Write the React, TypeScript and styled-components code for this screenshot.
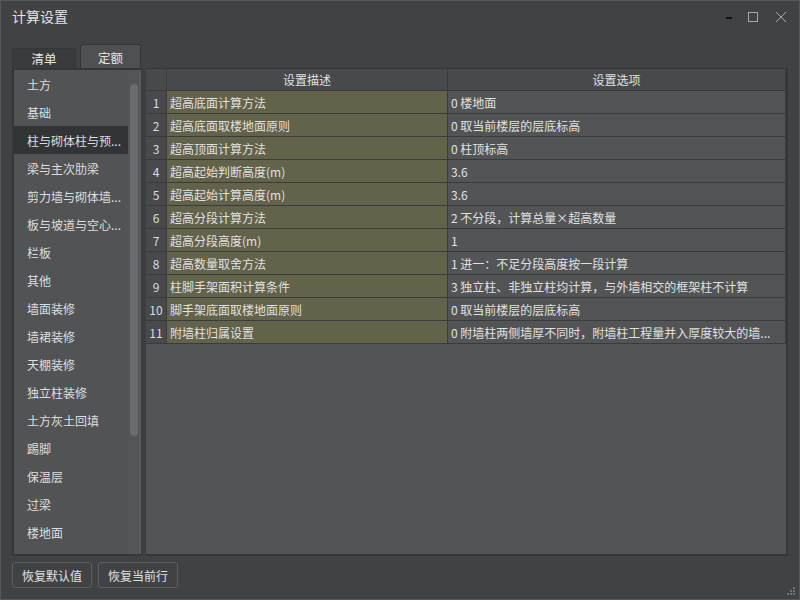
import styled, { createGlobalStyle } from "styled-components";

const GlobalStyle = createGlobalStyle`
  html, body {
    margin: 0;
    padding: 0;
    background: #414243;
  }
  * {
    box-sizing: border-box;
  }
`;

const Window = styled.div`
  width: 800px;
  height: 600px;
  background: #414243;
  border: 1px solid #55575a;
  display: flex;
  flex-direction: column;
  font-family: "Noto Sans CJK SC", "Noto Sans", sans-serif;
  color: #dcdcdc;
  position: relative;
  overflow: hidden;
`;

const TitleBar = styled.div`
  height: 33px;
  display: flex;
  align-items: center;
  padding: 0 4px 0 11px;
`;

const Title = styled.div`
  flex: 1;
  font-size: 14px;
  color: #e2e2e2;
  margin-top: -4px;
`;

const WinButton = styled.div`
  width: 28px;
  height: 30px;
  display: flex;
  align-items: center;
  justify-content: center;
  margin-top: -2px;
`;

const Body = styled.div`
  flex: 1;
  display: flex;
  flex-direction: column;
  padding: 10px 11px 0 11px;
`;

const TabRow = styled.div`
  display: flex;
  align-items: flex-end;
  gap: 4px;
  height: 24px;
`;

const Tab = styled.div<{ $active?: boolean }>`
  height: ${(p) => (p.$active ? "24px" : "20px")};
  width: ${(p) => (p.$active ? "61px" : "64px")};
  background: ${(p) => (p.$active ? "#4f5052" : "#3a3b3d")};
  border: 1px solid #353637;
  border-bottom: none;
  border-radius: 3px 3px 0 0;
  font-size: 12.5px;
  color: #e4e4e4;
  display: flex;
  align-items: center;
  justify-content: center;
  padding-top: ${(p) => (p.$active ? "2px" : "0")};
`;

const Panels = styled.div`
  height: 488px;
  display: flex;
`;

const ListPanel = styled.div`
  width: 129px;
  background: #525355;
  border: 2px solid #353637;
  border-right-width: 0;
  display: flex;
`;

const List = styled.div`
  flex: 1;
`;

const ListItem = styled.div<{ $selected?: boolean }>`
  height: 28px;
  display: flex;
  align-items: center;
  padding-left: 13px;
  font-size: 12px;
  color: #dedede;
  background: ${(p) => (p.$selected ? "#333436" : "transparent")};
  white-space: nowrap;
`;

const ScrollTrack = styled.div`
  width: 13px;
  background: #545557;
  padding: 14px 2px 0 2px;
  border-right: 2px solid #5a5b5d;
`;

const ScrollThumb = styled.div`
  width: 8px;
  height: 352px;
  background: #6a6b6d;
  border-radius: 4px;
`;

const Splitter = styled.div`
  width: 5px;
  background: #3d3e40;
`;

const TablePanel = styled.div`
  flex: 1;
  background: #535456;
  border-top: 1px solid #353637;
  border-right: 2px solid #353637;
  border-bottom: 2px solid #353637;
  display: flex;
  flex-direction: column;
`;

const Grid = styled.div`
  display: grid;
  grid-template-columns: 21px 281px 338px;
`;

const HeadCell = styled.div`
  height: 22px;
  background: #48494b;
  border-right: 1px solid #3a3b3d;
  border-bottom: 1px solid #3a3b3d;
  font-size: 12px;
  color: #e0e0e0;
  display: flex;
  align-items: center;
  justify-content: center;
`;

const NumCell = styled.div`
  height: 23px;
  background: #48494b;
  border-right: 1px solid #3a3b3d;
  border-bottom: 1px solid #3a3b3d;
  font-size: 12px;
  color: #dcdcdc;
  display: flex;
  align-items: center;
  justify-content: center;
`;

const Cell = styled.div<{ $tint?: boolean }>`
  height: 23px;
  background: ${(p) => (p.$tint ? "#63624a" : "#535456")};
  border-right: 1px solid #3a3b3d;
  border-bottom: 1px solid #3a3b3d;
  font-size: 12px;
  color: #e0e0e0;
  display: flex;
  align-items: center;
  padding-left: 3px;
  white-space: nowrap;
  overflow: hidden;
`;

const Footer = styled.div`
  display: flex;
  gap: 6px;
  padding-top: 6px;
`;

const Button = styled.div`
  height: 26px;
  padding: 0 9px;
  border: 1px solid #5d5e60;
  border-radius: 3px;
  background: #414243;
  font-size: 12px;
  color: #e0e0e0;
  display: flex;
  align-items: center;
`;

const Grip = styled.svg`
  position: absolute;
  right: 3px;
  bottom: 3px;
`;

const categories = [
  "土方",
  "基础",
  "柱与砌体柱与预...",
  "梁与主次肋梁",
  "剪力墙与砌体墙...",
  "板与坡道与空心...",
  "栏板",
  "其他",
  "墙面装修",
  "墙裙装修",
  "天棚装修",
  "独立柱装修",
  "土方灰土回填",
  "踢脚",
  "保温层",
  "过梁",
  "楼地面",
];

const rows: [string, string][] = [
  ["超高底面计算方法", "0 楼地面"],
  ["超高底面取楼地面原则", "0 取当前楼层的层底标高"],
  ["超高顶面计算方法", "0 柱顶标高"],
  ["超高起始判断高度(m)", "3.6"],
  ["超高起始计算高度(m)", "3.6"],
  ["超高分段计算方法", "2 不分段，计算总量×超高数量"],
  ["超高分段高度(m)", "1"],
  ["超高数量取舍方法", "1 进一：不足分段高度按一段计算"],
  ["柱脚手架面积计算条件", "3 独立柱、非独立柱均计算，与外墙相交的框架柱不计算"],
  ["脚手架底面取楼地面原则", "0 取当前楼层的层底标高"],
  ["附墙柱归属设置", "0 附墙柱两侧墙厚不同时，附墙柱工程量并入厚度较大的墙..."],
];

function Row({ n, desc, val }: { n: number; desc: string; val: string }) {
  return (
    <>
      <NumCell>{n}</NumCell>
      <Cell $tint>{desc}</Cell>
      <Cell>{val}</Cell>
    </>
  );
}

export default function App() {
  return (
    <>
      <GlobalStyle />
      <Window>
        <TitleBar>
          <Title>计算设置</Title>
          <WinButton>
            <svg width="14" height="12" viewBox="0 0 14 12">
              <rect x="8" y="6" width="7" height="2" fill="#111" />
            </svg>
          </WinButton>
          <WinButton>
            <svg width="12" height="12" viewBox="0 0 12 12">
              <rect x="1.5" y="1.5" width="9" height="9" fill="none" stroke="#a8a8a8" strokeWidth="1" />
            </svg>
          </WinButton>
          <WinButton>
            <svg width="12" height="12" viewBox="0 0 12 12">
              <path d="M1 1 L11 11 M11 1 L1 11" stroke="#a8a8a8" strokeWidth="1" />
            </svg>
          </WinButton>
        </TitleBar>
        <Body>
          <TabRow>
            <Tab>清单</Tab>
            <Tab $active>定额</Tab>
          </TabRow>
          <Panels>
            <ListPanel>
              <List>
                {categories.map((c, i) => (
                  <ListItem key={c} $selected={i === 2}>
                    {c}
                  </ListItem>
                ))}
              </List>
              <ScrollTrack>
                <ScrollThumb />
              </ScrollTrack>
            </ListPanel>
            <Splitter />
            <TablePanel>
              <Grid>
                <HeadCell />
                <HeadCell>设置描述</HeadCell>
                <HeadCell>设置选项</HeadCell>
                {rows.map(([desc, val], i) => (
                  <Row key={desc} n={i + 1} desc={desc} val={val} />
                ))}
              </Grid>
            </TablePanel>
          </Panels>
          <Footer>
            <Button>恢复默认值</Button>
            <Button>恢复当前行</Button>
          </Footer>
        </Body>
        <Grip width="9" height="9" viewBox="0 0 9 9">
          <rect x="6" y="0" width="2" height="2" fill="#707174" />
          <rect x="3" y="3" width="2" height="2" fill="#707174" />
          <rect x="6" y="3" width="2" height="2" fill="#707174" />
          <rect x="0" y="6" width="2" height="2" fill="#707174" />
          <rect x="3" y="6" width="2" height="2" fill="#707174" />
          <rect x="6" y="6" width="2" height="2" fill="#707174" />
        </Grip>
      </Window>
    </>
  );
}
